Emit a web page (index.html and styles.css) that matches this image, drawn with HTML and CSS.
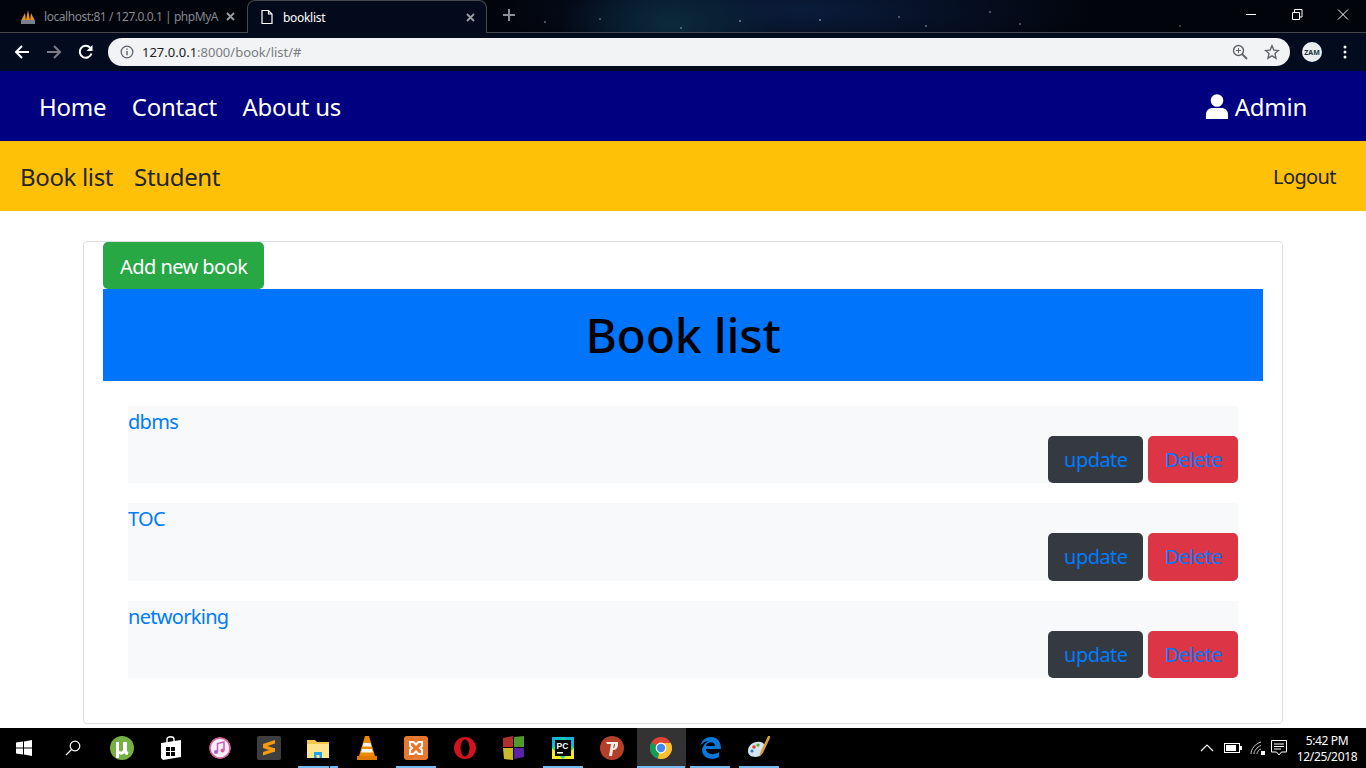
FILE: index.html
```html
<!DOCTYPE html>
<html lang="en">
<head>
    <meta charset="UTF-8">
    <title>booklist</title>
    <link rel="stylesheet" href="styles.css">
</head>
<body>
<div class="tabstrip">
    <div class="tab">
        <svg class="tab-icon" width="16" height="16" viewBox="0 0 16 16"><path d="M1 12 5 4l1 8zM6 11 8 1l2 10zM10 12l1-8 4 8z" fill="#e8912c"/><rect x="1" y="11" width="14" height="4" fill="#7a7f8c"/></svg>
        <span class="tab-title">localhost:81 / 127.0.0.1 | phpMyA</span>
        <svg class="tab-close" width="9" height="9" viewBox="0 0 9 9"><path d="m1 1 7 7M8 1 1 8" stroke="#9a9da2" stroke-width="1.800"/></svg>
    </div>
    <div class="tab tab-active">
        <svg class="tab-icon" width="16" height="16" viewBox="0 0 16 16"><path d="M3 1.500h6.500L13 5v9.500H3zM9.500 1.500V5H13" fill="none" stroke="#fff" stroke-width="1.200"/></svg>
        <span class="tab-title">booklist</span>
        <svg class="tab-close" width="9" height="9" viewBox="0 0 9 9"><path d="m1 1 7 7M8 1 1 8" stroke="#9a9da2" stroke-width="1.800"/></svg>
    </div>
    <svg class="newtab" width="14" height="14" viewBox="0 0 14 14"><path d="M7 1v12M1 7h12" stroke="#8b8f96" stroke-width="2"/></svg>
    <div class="winbtns">
        <svg width="46" height="30" viewBox="0 0 46 30"><path d="M18 14.500h10" stroke="#fff"/></svg>
        <svg width="46" height="30" viewBox="0 0 46 30"><path d="M18.500 16.500h7v7h-7zM20.500 16v-2.500h7.500v7.500H26" transform="translate(0 -4)" fill="none" stroke="#fff"/></svg>
        <svg width="46" height="30" viewBox="0 0 46 30"><path d="M18 9.500l10 10M28 9.500l-10 10" stroke="#fff"/></svg>
    </div>
</div>

<div class="toolbar">
    <svg class="tool" width="16" height="16" viewBox="0 0 16 16"><path d="M15 8H2M8 2 2 8l6 6" fill="none" stroke="#fff" stroke-width="2"/></svg>
    <svg class="tool" width="16" height="16" viewBox="0 0 16 16"><path d="M1 8h13M8 2l6 6-6 6" fill="none" stroke="#7b7f85" stroke-width="2"/></svg>
    <svg class="tool" width="16" height="16" viewBox="0 0 16 16"><path d="M13.500 9.500A6 6 0 1 1 12.200 3.700" fill="none" stroke="#fff" stroke-width="2"/><path d="M14.500 1v6h-6z" fill="#fff"/></svg>
    <div class="omnibox">
        <svg width="14" height="14" viewBox="0 0 14 14"><circle cx="7" cy="7" r="5.800" fill="none" stroke="#5f6368" stroke-width="1.300"/><path d="M7 6v4.200M7 3.500v1.300" stroke="#5f6368" stroke-width="1.400"/></svg>
        <span class="url"><span class="url-host">127.0.0.1</span>:8000/book/list/#</span>
        <svg class="omni-right" width="16" height="16" viewBox="0 0 16 16"><circle cx="6.500" cy="6.500" r="5" fill="none" stroke="#5f6368" stroke-width="1.400"/><path d="m10 10 5 5" stroke="#5f6368" stroke-width="1.800"/><path d="M6.500 4v5M4 6.500h5" stroke="#5f6368"/></svg>
        <svg width="16" height="16" viewBox="0 0 16 16"><path d="m8 1.800 1.900 4.300 4.600.4-3.500 3.100 1 4.600L8 11.800l-4 2.400 1-4.600-3.500-3.100 4.600-.4z" fill="none" stroke="#5f6368" stroke-width="1.400"/></svg>
    </div>
    <div class="avatar"><span>ZAM</span></div>
    <svg class="dots" width="4" height="14" viewBox="0 0 4 14"><circle cx="2" cy="2" r="1.500" fill="#fff"/><circle cx="2" cy="7" r="1.500" fill="#fff"/><circle cx="2" cy="12" r="1.500" fill="#fff"/></svg>
</div>

<nav class="nav-main">
    <a href="#">Home</a>
    <a href="#">Contact</a>
    <a href="#">About us</a>
    <a href="#" class="nav-admin">
        <svg width="22" height="25" viewBox="0 0 22 25"><circle cx="11" cy="6.500" r="6.300" fill="#fff"/><path d="M0 25v-4.500C0 16.500 3 14 6.500 14h9c3.500 0 6.500 2.500 6.500 6.500V25z" fill="#fff"/></svg>
        Admin
    </a>
</nav>

<nav class="nav-sub">
    <a href="#">Book list</a>
    <a href="#">Student</a>
    <a href="#" class="nav-logout">Logout</a>
</nav>

<main class="page">
    <div class="card">
        <a href="#" class="btn btn-add">Add new book</a>
        <h1 class="banner">Book list</h1>
        <ul class="books">
            <li class="book">
                <a href="#" class="book-name">dbms</a>
                <div class="book-actions">
                    <a href="#" class="btn btn-dark">update</a>
                    <a href="#" class="btn btn-red">Delete</a>
                </div>
            </li>
            <li class="book">
                <a href="#" class="book-name">TOC</a>
                <div class="book-actions">
                    <a href="#" class="btn btn-dark">update</a>
                    <a href="#" class="btn btn-red">Delete</a>
                </div>
            </li>
            <li class="book">
                <a href="#" class="book-name">networking</a>
                <div class="book-actions">
                    <a href="#" class="btn btn-dark">update</a>
                    <a href="#" class="btn btn-red">Delete</a>
                </div>
            </li>
        </ul>
    </div>
</main>

<footer class="taskbar">
    <div class="slot"><svg width="16" height="16" viewBox="0 0 16 16"><path d="M0 2.500 7 1.500v6H0zM8 1.400 16 0v7.500H8zM0 8.500h7v6l-7-1zM8 8.500h8V16l-8-1.400z" fill="#fff"/></svg></div>
    <div class="slot"><svg width="16" height="16" viewBox="0 0 16 16"><circle cx="10" cy="6" r="4.800" fill="none" stroke="#fff" stroke-width="1.200"/><path d="M6.500 9.500 1 15" stroke="#fff" stroke-width="1.300"/></svg></div>
    <div class="slot"><svg width="24" height="24" viewBox="0 0 24 24"><circle cx="12" cy="12" r="12" fill="#76b043"/><path d="M6 6h3v8c0 2 3 2 4 0V6h4v8c0 1 .5 2 1.500 2l-1 3c-1.500 0-2.500-.5-3-2-2 2-4 2-5.500 1v4H6z" fill="#fff"/></svg></div>
    <div class="slot"><svg width="22" height="24" viewBox="0 0 22 24"><path d="M1 7 21 4v17L3 24l-2-2z" fill="#fff"/><path d="M7 7V3c0-3 7-3 7 0v3" fill="none" stroke="#fff" stroke-width="1.400"/><path d="M6 11h4v4H6zM11 11h4v4h-4zM6 16h4v4H6zM11 16h4v4h-4z" fill="#000"/></svg></div>
    <div class="slot"><svg width="22" height="22" viewBox="0 0 22 22"><circle cx="11" cy="11" r="10.500" fill="#f4f2f6"/><circle cx="11" cy="11" r="10" fill="none" stroke="#d85c9c" stroke-width="1.500"/><path d="M8.500 15V6.500l6.500-1.500v8.500" fill="none" stroke="#c95ac0" stroke-width="1.500"/><circle cx="7" cy="15" r="2" fill="#a85fd6"/><circle cx="13.500" cy="13.500" r="2" fill="#e0589a"/></svg></div>
    <div class="slot"><svg width="24" height="24" viewBox="0 0 24 24"><rect width="24" height="24" rx="2" fill="#3e3e3e"/><path d="M6 8 18 4v3.500L6 11.500zM6 8.500l12 4V16L6 12zM6 16l12-4v3.500L6 19.500z" fill="#f79a0e"/></svg></div>
    <div class="slot slot-open slot-stack"><svg width="22" height="20" viewBox="0 0 22 20"><path d="M0 2h8l2 2h12v16H0z" fill="#f5c84b"/><path d="M0 6h22v14H0z" fill="#fde58f"/><path d="M7 20v-6h8v6h-2.500v-3h-3v3z" fill="#21a1e6"/></svg></div>
    <div class="slot"><svg width="20" height="24" viewBox="0 0 20 24"><path d="M8 0h4l6 20H2z" fill="#f08a00"/><path d="M6.500 7h7l1 3.500h-9zM5 13h10l1 3.500H4z" fill="#f4f4f4"/><path d="M0 20h20v4H0z" fill="#e37a00"/></svg></div>
    <div class="slot slot-open"><svg width="24" height="24" viewBox="0 0 24 24"><rect width="24" height="24" rx="3" fill="#e8782d"/><path d="M6 6h3.500L12 8.500 14.500 6H18v4l-2 2 2 2v4h-3.500L12 15.500 9.500 18H6v-4l2-2-2-2z" fill="none" stroke="#fff" stroke-width="2"/></svg></div>
    <div class="slot"><svg width="24" height="24" viewBox="0 0 24 24"><ellipse cx="12" cy="12" rx="11" ry="11" fill="#d3131f"/><ellipse cx="12" cy="12" rx="4.500" ry="8.500" fill="#000"/></svg></div>
    <div class="slot"><svg width="22" height="24" viewBox="0 0 22 24"><path d="M0 2 10 0v11H0z" fill="#b22f2f"/><path d="M11 1l10-1v11H11z" fill="#4f9a2c"/><path d="M0 12h10v12L1 23z" fill="#c9b92b"/><path d="M11 12h10v9l-10 2z" fill="#5a22a8"/></svg></div>
    <div class="slot slot-open"><svg width="22" height="22" viewBox="0 0 22 22"><rect width="22" height="22" fill="#21d789"/><path d="M0 22V11L11 22zM22 22H11L22 11z" fill="#f4ea2a"/><path d="M0 0h11L0 11zM22 0v11L11 0z" fill="#12b6d8"/><rect x="3" y="3" width="16" height="16" fill="#000"/><text x="4.500" y="11.500" class="pc-label">PC</text><rect x="5" y="15" width="6" height="1.500" fill="#fff"/></svg></div>
    <div class="slot"><svg width="24" height="24" viewBox="0 0 24 24"><circle cx="12" cy="12" r="12" fill="#b3412a"/><path d="M6 6h12v2h-4l-2 12H9l2-12H7zM15 8h3c0 4-2 6-5 6l.5-2c1 0 1.500-2 1.500-4z" fill="#f4ece8"/></svg></div>
    <div class="slot slot-open slot-current"><svg width="22" height="22" viewBox="0 0 22 22"><circle cx="11" cy="11" r="11" fill="#db4437"/><path d="M11 11 1.500 5.500A11 11 0 0 0 8 21.600z" fill="#0f9d58"/><path d="M11 6h9.700A11 11 0 0 1 8 21.600z" fill="#fbc02d"/><circle cx="11" cy="11" r="5.400" fill="#fff"/><circle cx="11" cy="11" r="4.200" fill="#4285f4"/></svg></div>
    <div class="slot slot-open"><svg width="22" height="22" viewBox="0 0 22 22"><path d="M1 9C3 3 7 0 12 0c6 0 10 4 10 12H7c0 5 8 7 13 3v5c-7 4-17 1-17-7 0-2 1-3 2-5 2-3 5-4 5-4C6 4 3 6 1 9zM7 9h9c0-5-8-5-9 0z" fill="#0a78d7"/></svg></div>
    <div class="slot slot-open"><svg width="24" height="24" viewBox="0 0 24 24"><path d="M1 15C1 9 7 5 13 6c4 .5 5 3 4 6l-3 7c-3 3-13 3-13-4z" fill="#d5e3ec"/><circle cx="7" cy="11" r="1.800" fill="#d9442f"/><circle cx="11" cy="9" r="1.600" fill="#5ca83a"/><circle cx="5" cy="15" r="1.600" fill="#2a78c8"/><path d="M23 0l-2 0-7 15-2 6 4-4 7-15z" fill="#d99a3c"/></svg></div>
    <div class="tray">
        <svg width="14" height="8" viewBox="0 0 14 8"><path d="m1 7 6-6 6 6" fill="none" stroke="#fff" stroke-width="1.100"/></svg>
        <svg class="tray-battery" width="18" height="10" viewBox="0 0 18 10"><rect x=".5" y=".5" width="15" height="9" fill="none" stroke="#fff"/><rect x="2" y="2" width="10" height="6" fill="#fff"/><rect x="16" y="3" width="2" height="4" fill="#fff"/></svg>
        <svg class="tray-wifi" width="16" height="14" viewBox="0 0 16 14"><path d="M1 13C1 8 5 3 11 1M4 13c0-3 3-7 7-8.500M7 13c0-2 1.500-4 4-5" fill="none" stroke="#c9c9c9"/><rect x="11" y="10" width="4" height="4" fill="#fff"/></svg>
        <svg class="tray-note" width="16" height="16" viewBox="0 0 16 16"><path d="M.5.500h15v11.500h-5L8 15l-2.500-3h-5zM3 4h10M3 6.500h10M3 9h7" fill="none" stroke="#fff"/></svg>
        <div class="clock"><span>5:42 PM</span><span>12/25/2018</span></div>
    </div>
</footer>
</body>
</html>
```
FILE: styles.css
```css
* {
    box-sizing: border-box;
}

body {
    margin: 0;
    height: 768px;
    overflow: hidden;
    display: flex;
    flex-direction: column;
    font-family: "Noto Sans", "Open Sans", sans-serif;
    background-color: #fff;
}

a {
    text-decoration: none;
}

/* browser frame */
.tabstrip {
    height: 33px;
    flex: none;
    display: flex;
    align-items: flex-end;
    padding-left: 8px;
    border-bottom: 1px solid #45484d;
    background-color: #02040c;
    background-image:
        radial-gradient(1.500px 1.500px at 740px 21px, #aab4c8, transparent),
        radial-gradient(1.500px 1.500px at 820px 20px, #aab4c8, transparent),
        radial-gradient(1.500px 1.500px at 899px 17px, #8a93a8, transparent),
        radial-gradient(1.500px 1.500px at 926px 26px, #8a93a8, transparent),
        radial-gradient(1.500px 1.500px at 681px 28px, #7f8da0, transparent),
        radial-gradient(1.500px 1.500px at 621px 34px, #7f8da0, transparent),
        radial-gradient(1.500px 1.500px at 600px 19px, #7f8da0, transparent),
        radial-gradient(1.500px 1.500px at 545px 22px, #8a93a8, transparent),
        radial-gradient(1.500px 1.500px at 990px 12px, #7f8da0, transparent),
        radial-gradient(1.500px 1.500px at 1020px 24px, #7f8da0, transparent),
        radial-gradient(1.500px 1.500px at 1180px 26px, #6a7080, transparent),
        radial-gradient(ellipse 110px 60px at 670px 24px, #0b2a3c, transparent),
        radial-gradient(ellipse 300px 60px at 800px 10px, #0a1c3c, transparent);
}

.tab {
    width: 239px;
    height: 33px;
    margin-bottom: -1px;
    display: flex;
    align-items: center;
    padding: 0 12px;
    font-size: 12px;
    color: #85888e;
    letter-spacing: -0.45px;
}

.tab-active {
    width: 240px;
    padding: 0 11px;
    color: #fff;
    letter-spacing: -0.3px;
    background-color: #020a1c;
    border: 1px solid #45484d;
    border-bottom: none;
    border-radius: 8px 8px 0 0;
}

.tab-icon {
    flex: none;
    margin-right: 8px;
}

.tab-title {
    flex: 1;
    white-space: nowrap;
}

.tab-close {
    flex: none;
}

.newtab {
    margin: 0 0 10px 15px;
}

.winbtns {
    margin-left: auto;
    align-self: flex-start;
    display: flex;
}

.winbtns svg {
    display: block;
}

.toolbar {
    height: 38px;
    flex: none;
    display: flex;
    align-items: center;
    padding-left: 14px;
    background-color: #020c1e;
}

.tool {
    flex: none;
    margin-right: 16px;
}

.omnibox {
    width: 1182px;
    height: 28px;
    margin-left: -2px;
    padding: 0 10px 0 12px;
    display: flex;
    align-items: center;
    border-radius: 14px;
    background-color: #f1f3f4;
}

.url {
    margin-left: 8px;
    font-size: 13px;
    color: #7a7d82;
    flex: 1;
}

.url-host {
    color: #202124;
}

.omni-right {
    margin-right: 16px;
}

.avatar {
    width: 20px;
    height: 20px;
    margin-left: 12px;
    border-radius: 50%;
    background-color: #e9eeee;
    display: flex;
    align-items: center;
    justify-content: center;
    overflow: hidden;
}

.avatar span {
    font-size: 7px;
    font-weight: bold;
    color: #16343a;
}

.dots {
    margin-left: 21px;
}

/* site navigation */
.nav-main,
.nav-sub {
    height: 70px;
    flex: none;
    display: flex;
    align-items: center;
    font-size: 24px;
}

.nav-main {
    padding: 0 59px 0 39px;
    gap: 25.5px;
    letter-spacing: -0.25px;
    background-color: #000080;
}

.nav-main a {
    color: #fff;
}

.nav-admin {
    margin-left: auto;
    display: flex;
    align-items: center;
    gap: 7px;
}

.nav-sub {
    padding: 0 30px 0 20px;
    gap: 21px;
    letter-spacing: -0.35px;
    background-color: #ffc107;
}

.nav-sub a {
    color: #212529;
}

.nav-sub .nav-logout {
    margin-left: auto;
    font-size: 20px;
    letter-spacing: -0.6px;
}

/* content */
.page {
    flex: 1;
    min-height: 0;
    padding: 30px 83px 0;
}

.card {
    height: 483px;
    padding: 0 19px;
    border: 1px solid #dfdfdf;
    border-radius: 4px;
}

.btn {
    display: inline-block;
    height: 47.5px;
    line-height: 48px;
    padding: 0 16px;
    font-size: 20px;
    letter-spacing: -0.55px;
    border-radius: 5px;
    color: #007bff;
}

.btn-add {
    height: 47px;
    line-height: 49px;
    padding: 0 17px;
    color: #fff;
    background-color: #28a745;
    vertical-align: top;
}

.btn-dark {
    background-color: #343a40;
}

.btn-red {
    background-color: #dc3545;
}

.banner {
    margin: 0;
    height: 92px;
    line-height: 92px;
    text-align: center;
    font-size: 48px;
    font-weight: 500;
    letter-spacing: -0.2px;
    color: #000;
    background-color: #0074fb;
}

.books {
    list-style: none;
    margin: 24.9px 25px 0;
    padding: 0;
    display: flex;
    flex-direction: column;
    gap: 20px;
}

.book {
    background-color: #f8f9fa;
}

.book-name {
    display: block;
    height: 30px;
    line-height: 32px;
    font-size: 20px;
    letter-spacing: -0.7px;
    color: #007bff;
}

.book-actions {
    display: flex;
    justify-content: flex-end;
    gap: 5px;
}

/* windows taskbar */
.taskbar {
    height: 40px;
    flex: none;
    display: flex;
    background-color: #000;
}

.slot {
    width: 49px;
    height: 40px;
    flex: none;
    display: flex;
    align-items: center;
    justify-content: center;
    padding-right: 2px;
    position: relative;
}

.slot-open::after {
    content: "";
    position: absolute;
    left: 4px;
    right: 5px;
    bottom: 0;
    height: 2px;
    background-color: #76b9ed;
}

.slot-stack::before {
    content: "";
    position: absolute;
    right: 13px;
    bottom: 0;
    width: 1px;
    height: 2px;
    background-color: #000;
    z-index: 1;
}

.slot-current {
    background-color: #333;
}

.slot-current::after {
    left: 0;
    right: 1px;
}

.pc-label {
    font-family: "Liberation Sans", sans-serif;
    font-size: 8.500px;
    font-weight: bold;
    fill: #fff;
}

.tray {
    margin-left: auto;
    display: flex;
    align-items: center;
    padding-right: 4px;
}

.tray-battery {
    margin-left: 10px;
}

.tray-wifi {
    margin-left: 8px;
}

.tray-note {
    margin-left: 5px;
}

.clock {
    width: 70px;
    margin-left: 5px;
    display: flex;
    flex-direction: column;
    align-items: center;
    gap: 1px;
    font-size: 12px;
    line-height: 15px;
    letter-spacing: -0.35px;
    color: #fff;
}
```
